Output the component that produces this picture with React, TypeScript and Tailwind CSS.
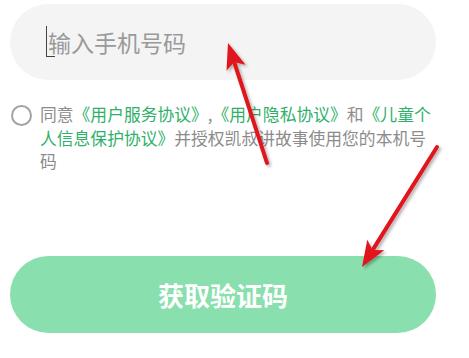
import React from 'react';

const font = { fontFamily: '"Noto Sans CJK SC", "Noto Sans", sans-serif' };

function Arrow({ x1, y1, x2, y2 }: { x1: number; y1: number; x2: number; y2: number }) {
  const a = Math.atan2(y2 - y1, x2 - x1);
  const len = 26;
  const w = 10;
  const bx = x2 - Math.cos(a) * len;
  const by = y2 - Math.sin(a) * len;
  const px = -Math.sin(a) * w;
  const py = Math.cos(a) * w;
  return (
    <g filter="url(#shadow)">
      <line x1={x1} y1={y1} x2={bx + Math.cos(a) * 4} y2={by + Math.sin(a) * 4} stroke="#e0141a" strokeWidth={4} strokeLinecap="round" />
      <polygon points={`${x2},${y2} ${bx + px},${by + py} ${bx + Math.cos(a) * 6},${by + Math.sin(a) * 6} ${bx - px},${by - py}`} fill="#e0141a" />
    </g>
  );
}

export default function App() {
  return (
    <div className="relative w-[469px] h-[358px] bg-white overflow-hidden px-[10px] pt-[4px]" style={font}>
      {/* Phone input */}
      <div className="h-[76px] w-[426px] rounded-full bg-[#f4f4f4] flex items-center pl-[38px] relative">
        <span className="absolute left-[36px] top-[22px] w-[1px] h-[31px] bg-[#444]" />
        <span className="absolute left-[36px] top-[52px] w-[9px] h-[1px] bg-[#444]" />
        <span className="text-[23px] text-[#9a9a9a] leading-none">输入手机号码</span>
      </div>

      {/* Agreement */}
      <div className="flex items-start gap-[8px] mt-[23px] pl-[1px]">
        <div className="w-[21px] h-[21px] mt-[2px] shrink-0 rounded-full border-2 border-[#a3a3a3]" />
        <p className="w-[393px] text-[16.8px] leading-[23.5px] text-[#8c8c8c]">
          同意<span className="text-[#2fb06a]">《用户服务协议》</span>,<span className="text-[#2fb06a]">《用户隐私协议》</span>和<span className="text-[#2fb06a]">《儿童个人信息保护协议》</span>并授权凯叔讲故事使用您的本机号码
        </p>
      </div>

      {/* Button */}
      <button className="mt-[82px] h-[77px] w-[426px] rounded-full bg-[#8adfae] text-white text-[26px] font-bold flex items-center justify-center">
        获取验证码
      </button>

      {/* Annotation arrows */}
      <svg className="absolute inset-0 pointer-events-none" width={469} height={358}>
        <defs>
          <filter id="shadow" x="-20%" y="-20%" width="140%" height="140%">
            <feDropShadow dx="2" dy="2" stdDeviation="1.5" floodColor="#000" floodOpacity="0.3" />
          </filter>
        </defs>
        <Arrow x1={267} y1={163} x2={228} y2={43} />
        <Arrow x1={437} y1={147} x2={362} y2={267} />
      </svg>
    </div>
  );
}
